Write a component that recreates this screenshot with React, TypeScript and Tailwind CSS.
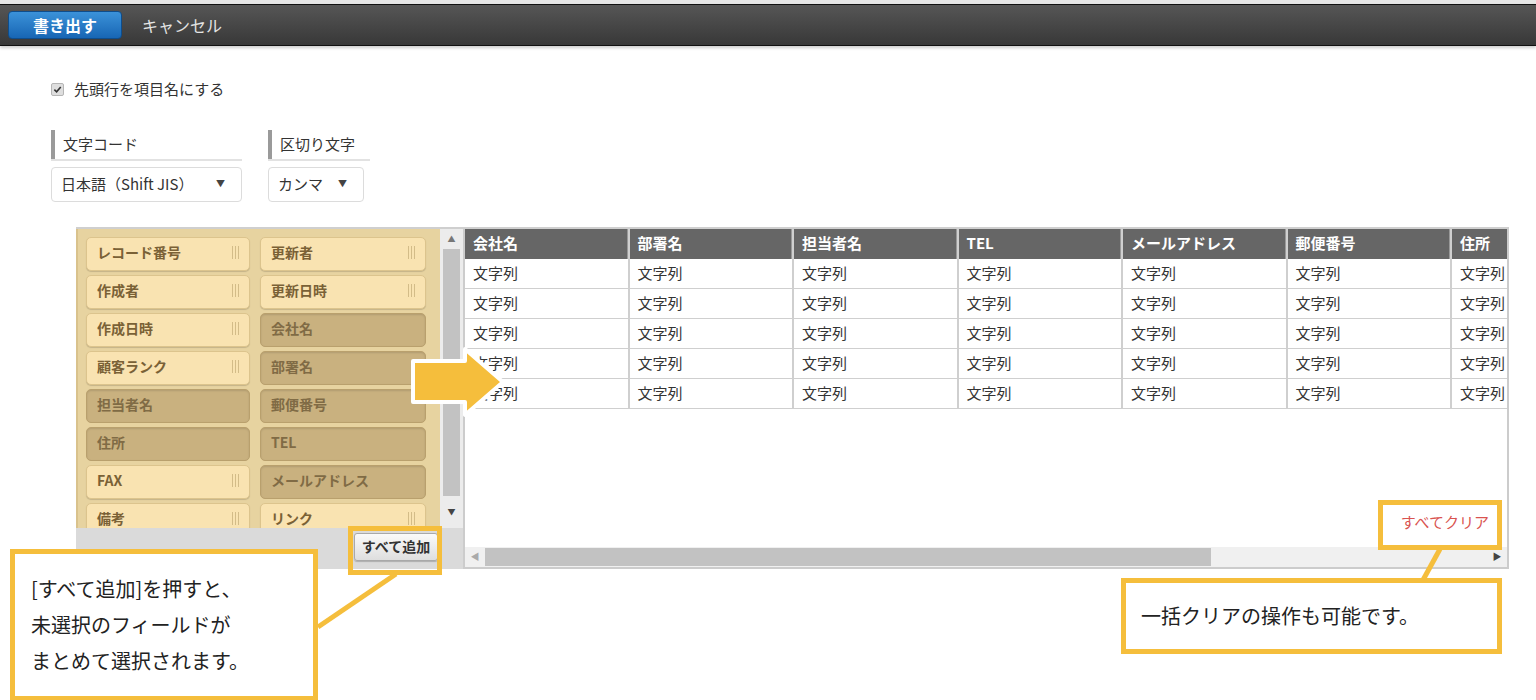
import React from 'react'

const jp = { fontFamily: '"Noto Sans CJK JP", "Noto Sans", sans-serif' }

type Field = { label: string; used?: boolean }

const fields: Field[] = [
  { label: 'レコード番号' }, { label: '更新者' },
  { label: '作成者' }, { label: '更新日時' },
  { label: '作成日時' }, { label: '会社名', used: true },
  { label: '顧客ランク' }, { label: '部署名', used: true },
  { label: '担当者名', used: true }, { label: '郵便番号', used: true },
  { label: '住所', used: true }, { label: 'TEL', used: true },
  { label: 'FAX' }, { label: 'メールアドレス', used: true },
  { label: '備考' }, { label: 'リンク' },
]

const columns = ['会社名', '部署名', '担当者名', 'TEL', 'メールアドレス', '郵便番号', '住所']

function Grip() {
  return (
    <span className="flex gap-[2px] h-[13px]">
      <span className="w-px h-full bg-[#d3bc88]" />
      <span className="w-px h-full bg-[#d3bc88]" />
      <span className="w-px h-full bg-[#d3bc88]" />
    </span>
  )
}

function FieldChip({ f }: { f: Field }) {
  return (
    <div
      className={`h-[34px] rounded-[5px] border flex items-center justify-between pl-[10px] pr-[10px] pb-[3px] text-[14px] font-bold leading-none ${
        f.used
          ? 'bg-[#c9b17f] border-[#b9a06d] text-[#806b45] shadow-[inset_0_1px_2px_rgba(0,0,0,0.12)]'
          : 'bg-[#f9e3b1] border-[#dcc48d] text-[#7a6136] shadow-[0_1px_1px_rgba(0,0,0,0.15)]'
      }`}
    >
      <span>{f.label}</span>
      {!f.used && <Grip />}
    </div>
  )
}

function Select({ value, width }: { value: string; width: string }) {
  return (
    <div className={`${width} h-[35px] mt-[6px] border border-[#dcdcdc] rounded-[4px] flex items-center justify-between pl-[9px] pr-[16px] text-[15px] text-[#333]`}>
      <span>{value}</span>
      <span className="text-[9px] text-[#444]">▼</span>
    </div>
  )
}

export default function App() {
  return (
    <div className="relative w-[1536px] h-[700px] bg-white overflow-hidden" style={jp}>
      {/* toolbar */}
      <div className="border-t-[4px] border-[#e6e6e6]">
        <div className="h-[42px] bg-gradient-to-b from-[#565656] to-[#383838] border-y border-[#111] flex items-center pl-[8px] gap-[20px] shadow-[0_2px_3px_rgba(0,0,0,0.2)]">
          <button className="w-[114px] h-[28px] rounded-[4px] border border-[#0e4d8c] bg-gradient-to-b from-[#3b92d9] to-[#1766b4] text-white font-bold text-[16px]">
            書き出す
          </button>
          <span className="text-[#e4e4e4] text-[16px]">キャンセル</span>
        </div>
      </div>

      <div className="pl-[51px] pt-[32px]">
        <label className="flex items-center gap-[10px] text-[15px] text-[#333]">
          <span className="w-[13px] h-[13px] rounded-[2px] bg-[#dedede] border border-[#b5b5b5] flex items-center justify-center">
            <svg width="9" height="9" viewBox="0 0 10 10">
              <path d="M1.5 5.2 L4 7.6 L8.6 2.2" fill="none" stroke="#333" strokeWidth="1.8" />
            </svg>
          </span>
          先頭行を項目名にする
        </label>

        <div className="flex gap-[26px] mt-[29px]">
          <div>
            <div className="w-[191px] border-b-2 border-[#e2e2e2]">
              <div className="h-[29px] border-l-4 border-[#9a9a9a] pl-[8px] flex items-center text-[15px] text-[#333]">文字コード</div>
            </div>
            <Select value="日本語（Shift JIS）" width="w-[191px]" />
          </div>
          <div>
            <div className="w-[102px] border-b-2 border-[#e2e2e2]">
              <div className="h-[29px] border-l-4 border-[#9a9a9a] pl-[8px] flex items-center text-[15px] text-[#333]">区切り文字</div>
            </div>
            <Select value="カンマ" width="w-[96px]" />
          </div>
        </div>

        {/* field picker + preview */}
        <div className="ml-[25px] mt-[25px] w-[1433px] h-[342px] flex border-t-2 border-[#cfcfcf]">
          <div className="w-[387px] flex flex-col">
            <div className="h-[299px] flex">
              <div className="w-[364px] bg-[#e7d3a0] border-l-2 border-[#d9c28c] pl-[8px] pt-[8px] overflow-hidden">
                <div className="grid grid-cols-[164px_166px] gap-x-[10px] gap-y-[4px]">
                  {fields.map((f) => (
                    <FieldChip key={f.label} f={f} />
                  ))}
                </div>
              </div>
              <div className="w-[23px] bg-[#ececec] flex flex-col items-center">
                <span className="h-[20px] text-[8px] text-[#777] flex items-center">▲</span>
                <div className="w-[17px] h-[247px] bg-[#c2c2c2]" />
                <span className="flex-1 text-[8px] text-[#444] flex items-center">▼</span>
              </div>
            </div>
            <div className="flex-1 bg-[#dadada] flex justify-end items-start pt-[5px] pr-[25px]">
              <button className="w-[84px] h-[28px] rounded-[3px] border border-[#a9a9a9] bg-gradient-to-b from-[#fafafa] to-[#dedede] text-[14px] font-bold text-[#333] shadow-[0_1px_1px_rgba(0,0,0,0.2)]">
                すべて追加
              </button>
            </div>
          </div>

          <div className="flex-1 flex flex-col border-l-2 border-r-2 border-b-2 border-[#cccccc] bg-white overflow-hidden">
            <div className="flex-1 overflow-hidden">
              <div className="flex w-max">
                {columns.map((c) => (
                  <div key={c} className="w-[164.5px] border-r-2 border-[#cfcfcf] shrink-0">
                    <div className="h-[30px] bg-[#666] text-white text-[15px] font-bold pl-[8px] flex items-center border-r border-[#999]">{c}</div>
                    {[0, 1, 2, 3, 4].map((r) => (
                      <div key={r} className="h-[30px] border-b border-[#cfcfcf] text-[15px] text-[#333] pl-[8px] flex items-center">
                        文字列
                      </div>
                    ))}
                  </div>
                ))}
              </div>
              <div className="flex justify-end pr-[18px] mt-[102px] text-[15px] text-[#d9534f]">すべてクリア</div>
            </div>
            <div className="h-[20px] bg-[#f0f0f0] flex items-center">
              <span className="w-[20px] text-[9px] text-[#aaa] text-center">◀</span>
              <div className="w-[726px] h-[18px] bg-[#c2c2c2]" />
              <span className="flex-1" />
              <span className="w-[20px] text-[9px] text-[#444] text-center">▶</span>
            </div>
          </div>
        </div>
      </div>

      {/* annotation: arrow into the preview */}
      <svg className="absolute left-[400px] top-[340px]" width="112" height="84" viewBox="400 340 112 84">
        <polygon
          points="413,361 465,361 465,349 503,382 465,415 465,402 413,402"
          fill="#f5be3c"
          stroke="#ffffff"
          strokeWidth="4"
          strokeLinejoin="round"
        />
      </svg>

      {/* annotation connectors */}
      <svg className="absolute left-0 top-0 pointer-events-none" width="1536" height="700">
        <line x1="318" y1="627" x2="396" y2="574" stroke="#f5be3c" strokeWidth="5" />
        <line x1="1440" y1="549" x2="1423" y2="580" stroke="#f5be3c" strokeWidth="5" />
      </svg>

      <div className="absolute left-[348px] top-[526px] w-[94px] h-[49px] border-[5px] border-[#f5be3c]" />
      <div className="absolute left-[1378px] top-[500px] w-[124px] h-[50px] border-[5px] border-[#f5be3c]" />

      <div className="absolute left-[10px] top-[549px] w-[308px] h-[152px] border-[5px] border-[#f5be3c] bg-white pl-[16px] pt-[17px] text-[20px] leading-[36px] text-[#222]">
        <p>[すべて追加]を押すと、</p>
        <p>未選択のフィールドが</p>
        <p>まとめて選択されます。</p>
      </div>

      <div className="absolute left-[1121px] top-[578px] w-[381px] h-[76px] border-[5px] border-[#f5be3c] bg-white pl-[15px] flex items-center text-[20px] text-[#222]">
        一括クリアの操作も可能です。
      </div>
    </div>
  )
}
